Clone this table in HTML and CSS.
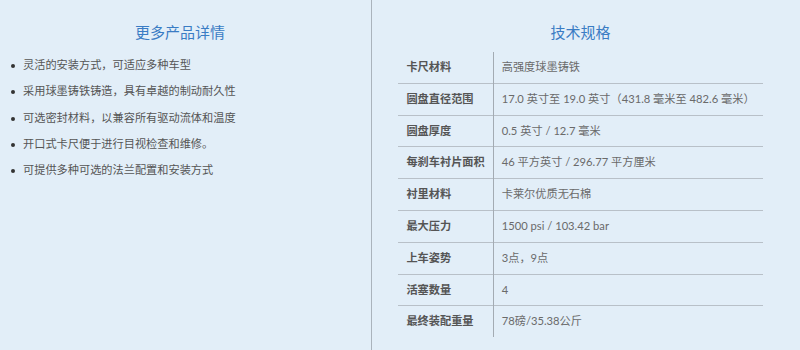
FILE: index.html
```html
<!DOCTYPE html>
<html lang="zh">
<head>
<meta charset="utf-8">
<link rel="stylesheet" href="styles.css">
</head>
<body>
<div class="wrap">
  <section class="col col-left">
    <h2 class="title">更多产品详情</h2>
    <ul class="features">
      <li>灵活的安装方式，可适应多种车型</li>
      <li>采用球墨铸铁铸造，具有卓越的制动耐久性</li>
      <li>可选密封材料，以兼容所有驱动流体和温度</li>
      <li>开口式卡尺便于进行目视检查和维修。</li>
      <li>可提供多种可选的法兰配置和安装方式</li>
    </ul>
  </section>
  <section class="col col-right">
    <h2 class="title">技术规格</h2>
    <table class="specs">
      <tr><th>卡尺材料</th><td>高强度球墨铸铁</td></tr>
      <tr><th>圆盘直径范围</th><td>17.0 英寸至 19.0 英寸（431.8 毫米至 482.6 毫米）</td></tr>
      <tr><th>圆盘厚度</th><td>0.5 英寸 / 12.7 毫米</td></tr>
      <tr><th>每刹车衬片面积</th><td>46 平方英寸 / 296.77 平方厘米</td></tr>
      <tr><th>衬里材料</th><td>卡莱尔优质无石棉</td></tr>
      <tr><th>最大压力</th><td>1500 psi / 103.42 bar</td></tr>
      <tr><th>上车姿势</th><td>3点，9点</td></tr>
      <tr><th>活塞数量</th><td>4</td></tr>
      <tr><th>最终装配重量</th><td>78磅/35.38公斤</td></tr>
    </table>
  </section>
</div>
</body>
</html>
```
FILE: styles.css
```css
html, body {
  margin: 0;
  padding: 0;
  background: #e2eef8;
}
body {
  font-family: "Lato", "Noto Sans CJK SC", sans-serif;
  font-size: 11.2px;
  color: #555;
}
.wrap {
  display: flex;
  height: 350px;
  overflow: hidden;
}
.col {
  padding-top: 12px;
}
.col-left {
  width: 360px;
  padding-right: 11px;
  border-right: 1px solid #aab3bc;
}
.col-right {
  flex: 1;
  padding-right: 11px;
}
.title {
  margin: 10px 0 0;
  font-size: 15px;
  line-height: 20px;
  font-weight: normal;
  color: #3a7cc4;
  text-align: center;
}
.features {
  list-style: none;
  margin: 10px 0 0;
  padding: 0;
}
.features li {
  padding-left: 23px;
  line-height: 26.3px;
  color: #555;
}
.features li::before {
  content: "";
  display: inline-block;
  width: 4px;
  height: 4px;
  border-radius: 50%;
  background: #333;
  margin-left: -12px;
  margin-right: 8px;
  vertical-align: middle;
}
.specs {
  width: 363px;
  margin: 10px auto 0;
  border-collapse: collapse;
}
.specs tr {
  border-bottom: 1px solid #b8c0c8;
}
.specs tr:last-child {
  border-bottom: none;
}
.specs th, .specs td {
  padding: 7px 8px;
  line-height: 16.8px;
  text-align: left;
  white-space: nowrap;
}
.specs th {
  width: 78px;
  font-weight: bold;
  color: #555;
  border-right: 1px solid #a3abb3;
}
.specs td {
  color: #6a6a6a;
}
```
